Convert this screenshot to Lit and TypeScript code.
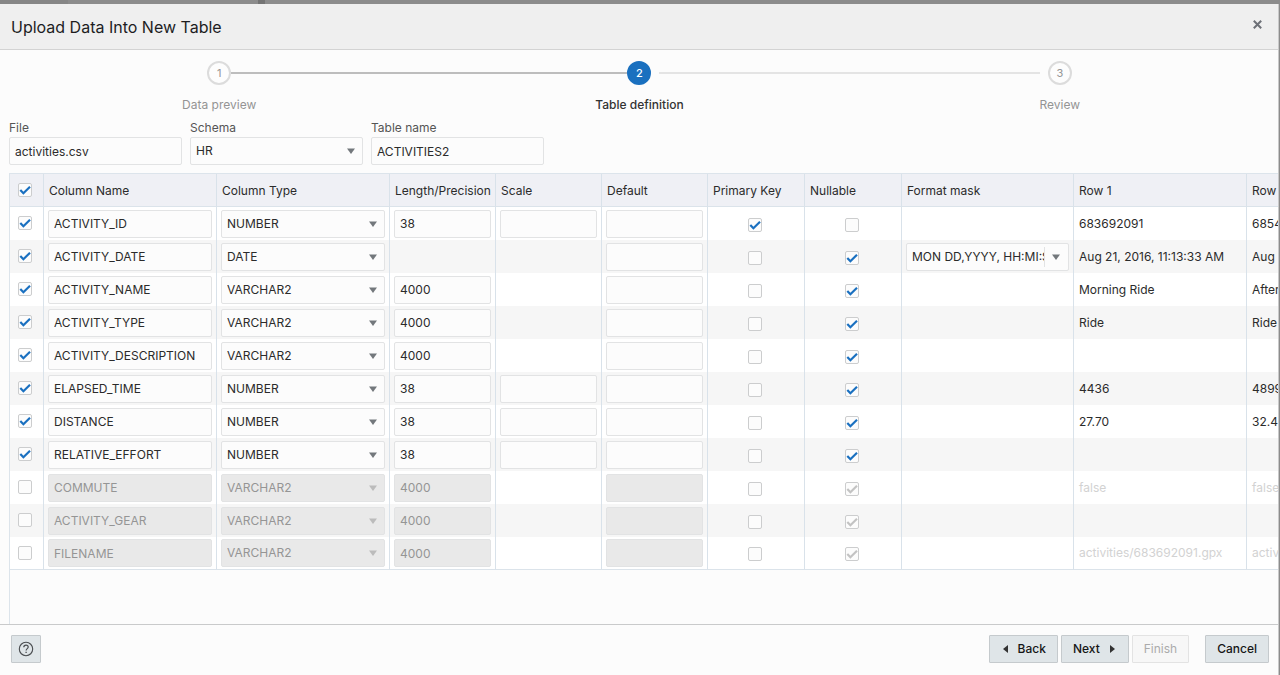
import { LitElement, html, css, nothing } from "lit";
import { customElement, property, state } from "lit/decorators.js";
import { classMap } from "lit/directives/class-map.js";

interface ColumnDef {
  on: boolean;
  name: string;
  type: string;
  length?: string;
  scale?: boolean;
  pk?: boolean;
  nullable: boolean;
  mask?: string;
  row1: string;
  row2: string;
}

const COLUMNS: ColumnDef[] = [
  { on: true, name: "ACTIVITY_ID", type: "NUMBER", length: "38", scale: true, pk: true, nullable: false, row1: "683692091", row2: "6854" },
  { on: true, name: "ACTIVITY_DATE", type: "DATE", nullable: true, mask: "MON DD,YYYY, HH:MI:SS AM", row1: "Aug 21, 2016, 11:13:33 AM", row2: "Aug 2" },
  { on: true, name: "ACTIVITY_NAME", type: "VARCHAR2", length: "4000", nullable: true, row1: "Morning Ride", row2: "After" },
  { on: true, name: "ACTIVITY_TYPE", type: "VARCHAR2", length: "4000", nullable: true, row1: "Ride", row2: "Ride" },
  { on: true, name: "ACTIVITY_DESCRIPTION", type: "VARCHAR2", length: "4000", nullable: true, row1: "", row2: "" },
  { on: true, name: "ELAPSED_TIME", type: "NUMBER", length: "38", scale: true, nullable: true, row1: "4436", row2: "4899" },
  { on: true, name: "DISTANCE", type: "NUMBER", length: "38", scale: true, nullable: true, row1: "27.70", row2: "32.47" },
  { on: true, name: "RELATIVE_EFFORT", type: "NUMBER", length: "38", scale: true, nullable: true, row1: "", row2: "" },
  { on: false, name: "COMMUTE", type: "VARCHAR2", length: "4000", nullable: true, row1: "false", row2: "false" },
  { on: false, name: "ACTIVITY_GEAR", type: "VARCHAR2", length: "4000", nullable: true, row1: "", row2: "" },
  { on: false, name: "FILENAME", type: "VARCHAR2", length: "4000", nullable: true, row1: "activities/683692091.gpx", row2: "activ" },
];

const controls = css`
  :host {
    box-sizing: border-box;
    font-family: Inter, "Liberation Sans", sans-serif;
    font-size: 12px;
    line-height: 16px;
    color: #2b2b2b;
  }
  * {
    box-sizing: border-box;
  }
  input,
  select,
  button {
    font: inherit;
    color: inherit;
    margin: 0;
  }
  .text,
  .select select {
    appearance: none;
    display: block;
    width: 100%;
    height: 28px;
    padding: 0 5px;
    border: 1px solid #e2e3e4;
    border-radius: 2px;
    background: #fcfcfc;
    outline-offset: -1px;
  }
  .select {
    display: grid;
    align-items: center;
  }
  .select > * {
    grid-area: 1 / 1;
  }
  .arrow {
    justify-self: end;
    margin-right: 8px;
    width: 8px;
    height: 6px;
    fill: #73787c;
    pointer-events: none;
  }
  .text:disabled,
  .select select:disabled {
    background: #e9e9e9;
    color: #959595;
    opacity: 1;
  }
  select:disabled + .arrow {
    fill: #bcbcbc;
  }
`;

const arrow = html`<svg class="arrow" viewBox="0 0 8 6" aria-hidden="true"><path d="M0 0.4h8L4 6z" /></svg>`;

@customElement("check-box")
class CheckBox extends LitElement {
  @property({ type: Boolean }) checked = false;
  @property({ type: Boolean }) disabled = false;
  @property() label = "";

  static styles = css`
    :host {
      display: inline-grid;
      width: 14px;
      height: 14px;
      vertical-align: middle;
    }
    input,
    svg {
      grid-area: 1 / 1;
      width: 14px;
      height: 14px;
    }
    input {
      appearance: none;
      box-sizing: border-box;
      margin: 0;
      border: 1px solid #cccdce;
      border-radius: 2px;
      background: #fcfcfc;
    }
    svg {
      pointer-events: none;
      fill: none;
      stroke: #1a70c0;
      stroke-width: 2.2;
    }
    input:disabled + svg {
      stroke: #c3c3c3;
    }
  `;

  render() {
    return html`
      <input
        type="checkbox"
        aria-label=${this.label}
        .checked=${this.checked}
        ?disabled=${this.disabled}
        @change=${(e: Event) => (this.checked = (e.target as HTMLInputElement).checked)}
      />
      ${this.checked ? html`<svg viewBox="0 0 14 14" aria-hidden="true"><path d="M2.3 7L5.4 10.2L12 3.7" /></svg>` : nothing}
    `;
  }
}

@customElement("wizard-steps")
class WizardSteps extends LitElement {
  @property({ type: Number }) current = 2;
  private steps = ["Data preview", "Table definition", "Review"];

  static styles = css`
    ol {
      display: grid;
      grid-template-columns: repeat(3, 1fr);
      margin: 0;
      padding: 0;
      list-style: none;
    }
    li {
      display: grid;
      grid-template-columns: 1fr 24px 1fr;
      align-items: center;
      row-gap: 12px;
      color: #949494;
    }
    .circle {
      box-sizing: border-box;
      height: 24px;
      border: 2px solid #dcdcdc;
      border-radius: 50%;
      background: #fdfdfd;
      display: grid;
      place-items: center;
      font-size: 11px;
    }
    .line {
      height: 2px;
    }
    .done {
      background: #bdbdbd;
    }
    .todo {
      background: #e4e4e4;
    }
    .circle + .todo {
      margin-left: 8px;
    }
    .todo:first-child {
      margin-right: 8px;
    }
    .label {
      grid-column: 1 / -1;
      text-align: center;
      line-height: 16px;
    }
    .current {
      color: #333;
      font-weight: 500;
    }
    .current .circle {
      background: #1a70bf;
      border-color: #1a70bf;
      color: #fff;
    }
  `;

  render() {
    return html`<ol>
      ${this.steps.map((label, i) => {
        const n = i + 1;
        const line = (from: number) =>
          from < 1 || from >= this.steps.length ? "line" : from < this.current ? "line done" : "line todo";
        return html`<li class=${classMap({ current: n === this.current })}>
          <span class=${line(n - 1)}></span><span class="circle">${n}</span><span class=${line(n)}></span>
          <span class="label">${label}</span>
        </li>`;
      })}
    </ol>`;
  }
}

@customElement("column-table")
class ColumnTable extends LitElement {
  @state() private rows = COLUMNS;

  static styles = [
    controls,
    css`
      :host {
        display: block;
        overflow: hidden;
        border: 1px solid #dce4eb;
        border-width: 1px 0 0 1px;
      }
      table {
        table-layout: fixed;
        width: 1409px;
        border-collapse: separate;
        border-spacing: 0;
      }
      .c-check { width: 34px; }
      .c-wide { width: 173px; }
      .c-num { width: 106px; }
      .c-flag { width: 97px; }
      .c-mask { width: 172px; }
      th,
      td {
        padding: 0 5px;
        border-right: 1px solid #d9e2ea;
        text-align: left;
        white-space: nowrap;
        overflow: hidden;
      }
      th {
        height: 33px;
        padding-top: 2px;
        background: #eff0f5;
        border-bottom: 1px solid #dbe3ea;
        font-weight: 400;
      }
      td {
        height: 33px;
        background: #fff;
      }
      tbody tr:nth-child(even) td {
        background: #f6f6f6;
      }
      tbody tr:last-child td {
        border-bottom: 1px solid #dbe3ea;
      }
      td.fill {
        padding: 0 4px;
      }
      .pick {
        padding: 0 4px 2px 0;
        text-align: center;
      }
      .flag {
        padding: 1px 2px 0 0;
        text-align: center;
      }
      .off .sample {
        color: #d2d2d2;
      }
      .combo {
        display: grid;
        grid-template-columns: 1fr 24px;
        align-items: center;
        height: 28px;
        border: 1px solid #e2e3e4;
        border-radius: 2px;
        background: #fcfcfc;
      }
      .combo input {
        min-width: 0;
        width: 100%;
        border: 0;
        padding: 0 0 0 5px;
        background: none;
      }
      .combo button {
        display: grid;
        align-items: center;
        height: 20px;
        border: 0;
        border-left: 1px solid #e2e3e4;
        padding: 0;
        background: none;
      }
    `,
  ];

  private renderRow(c: ColumnDef) {
    const off = !c.on;
    return html`<tr class=${classMap({ off })}>
      <td class="pick"><check-box label="Include ${c.name}" ?checked=${c.on}></check-box></td>
      <td class="fill"><input class="text" aria-label="Column Name" .value=${c.name} ?disabled=${off} /></td>
      <td class="fill">
        <span class="select">
          <select aria-label="Column Type" ?disabled=${off}><option>${c.type}</option></select>${arrow}
        </span>
      </td>
      <td class="fill">
        ${c.length ? html`<input class="text" aria-label="Length/Precision" .value=${c.length} ?disabled=${off} />` : nothing}
      </td>
      <td class="fill">${c.scale ? html`<input class="text" aria-label="Scale" />` : nothing}</td>
      <td class="fill"><input class="text" aria-label="Default" ?disabled=${off} /></td>
      <td class="flag"><check-box label="Primary Key" ?checked=${!!c.pk}></check-box></td>
      <td class="flag"><check-box label="Nullable" ?checked=${c.nullable} ?disabled=${off}></check-box></td>
      <td class="fill">
        ${c.mask
          ? html`<div class="combo">
              <input aria-label="Format mask" .value=${c.mask} /><button aria-label="Show format masks">${arrow}</button>
            </div>`
          : nothing}
      </td>
      <td class="sample">${c.row1}</td>
      <td class="sample">${c.row2}</td>
    </tr>`;
  }

  render() {
    return html`<table>
      <colgroup>
        <col class="c-check" /><col class="c-wide" /><col class="c-wide" />
        <col class="c-num" /><col class="c-num" /><col class="c-num" />
        <col class="c-flag" /><col class="c-flag" />
        <col class="c-mask" /><col class="c-wide" /><col class="c-wide" />
      </colgroup>
      <thead>
        <tr>
          <th class="pick"><check-box label="Include all columns" checked></check-box></th>
          <th>Column Name</th>
          <th>Column Type</th>
          <th>Length/Precision</th>
          <th>Scale</th>
          <th>Default</th>
          <th>Primary Key</th>
          <th>Nullable</th>
          <th>Format mask</th>
          <th>Row 1</th>
          <th>Row 2</th>
        </tr>
      </thead>
      <tbody>
        ${this.rows.map((c) => this.renderRow(c))}
      </tbody>
    </table>`;
  }
}

@customElement("app-root")
class AppRoot extends LitElement {
  static styles = [
    controls,
    css`
      :host {
        display: flex;
        flex-direction: column;
        height: 100vh;
        padding: 4px 1px 0 0;
        background: linear-gradient(90deg, #868686 68px, #8c8c8c 68px 258px, #747474 258px 265px, #8c8c8c 265px);
      }
      .dialog {
        flex: 1;
        min-height: 0;
        display: flex;
        flex-direction: column;
        background: #fcfcfc;
        border-right: 1px solid #c9c9c9;
      }
      header {
        display: flex;
        align-items: center;
        justify-content: space-between;
        height: 46px;
        padding: 0 15px 0 11px;
        background: #efefef;
        border-bottom: 1px solid #d3d3d3;
      }
      h1 {
        margin: 0;
        font-size: 16px;
        line-height: 24px;
        font-weight: 400;
        color: #1d1d1f;
      }
      .close {
        display: grid;
        place-items: center;
        width: 12px;
        height: 20px;
        padding: 0 0 4px;
        border: 0;
        background: none;
      }
      .close svg {
        width: 9px;
        height: 9px;
        stroke: #6d7077;
        stroke-width: 2;
      }
      wizard-steps {
        display: block;
        margin: 11px 8px 0 9px;
      }
      .fields {
        display: flex;
        gap: 8px;
        margin: 7px 9px 8px;
      }
      .field {
        display: grid;
        gap: 1px;
        width: 173px;
      }
      .field label {
        color: #555;
      }
      column-table {
        flex: 1;
        min-height: 0;
        margin-left: 9px;
      }
      footer {
        display: flex;
        gap: 3px;
        padding: 10px 9px 12px 11px;
        border-top: 1px solid #c9cacb;
      }
      .btn {
        display: flex;
        align-items: center;
        gap: 8px;
        height: 28px;
        padding: 0 11px;
        border: 1px solid #c5cacd;
        border-radius: 1px;
        background: #dfe5e8;
        color: #161616;
        font-weight: 500;
      }
      .btn:disabled {
        background: #f7f7f7;
        border-color: #e3e3e3;
        color: #ababab;
        font-weight: 400;
      }
      .help {
        margin-right: auto;
        padding: 0 6px;
      }
      .help svg {
        width: 16px;
        height: 16px;
        fill: none;
        stroke: #4a4d50;
      }
      .tri {
        width: 5px;
        height: 8px;
        margin: 0 2px;
        fill: #333;
      }
      .cancel {
        margin-left: 13px;
      }
    `,
  ];

  render() {
    return html`
      <section class="dialog" role="dialog" aria-labelledby="title">
        <header>
          <h1 id="title">Upload Data Into New Table</h1>
          <button class="close" aria-label="Close">
            <svg viewBox="0 0 9 9"><path d="M0.8 0.8L8.2 8.2M8.2 0.8L0.8 8.2" /></svg>
          </button>
        </header>
        <wizard-steps current="2"></wizard-steps>
        <div class="fields">
          <div class="field">
            <label for="file">File</label>
            <input class="text" id="file" value="activities.csv" />
          </div>
          <div class="field">
            <label for="schema">Schema</label>
            <span class="select"><select id="schema"><option>HR</option></select>${arrow}</span>
          </div>
          <div class="field">
            <label for="table">Table name</label>
            <input class="text" id="table" value="ACTIVITIES2" />
          </div>
        </div>
        <column-table></column-table>
        <footer>
          <button class="btn help" aria-label="Help">
            <svg viewBox="0 0 16 16">
              <circle cx="8" cy="8" r="6.7" stroke-width="1.1" />
              <path d="M5.8 6.3C5.8 4.9 6.7 4.2 8 4.2S10.2 5 10.2 6.1C10.2 7.6 8.1 7.7 8.1 9.6" stroke-width="1.2" />
              <path d="M8.1 10.8V12" stroke-width="1.3" />
            </svg>
          </button>
          <button class="btn"><svg class="tri" viewBox="0 0 5 8"><path d="M5 0v8L0 4z" /></svg>Back</button>
          <button class="btn">Next<svg class="tri" viewBox="0 0 5 8"><path d="M0 0v8L5 4z" /></svg></button>
          <button class="btn" disabled>Finish</button>
          <button class="btn cancel">Cancel</button>
        </footer>
      </section>
    `;
  }
}
